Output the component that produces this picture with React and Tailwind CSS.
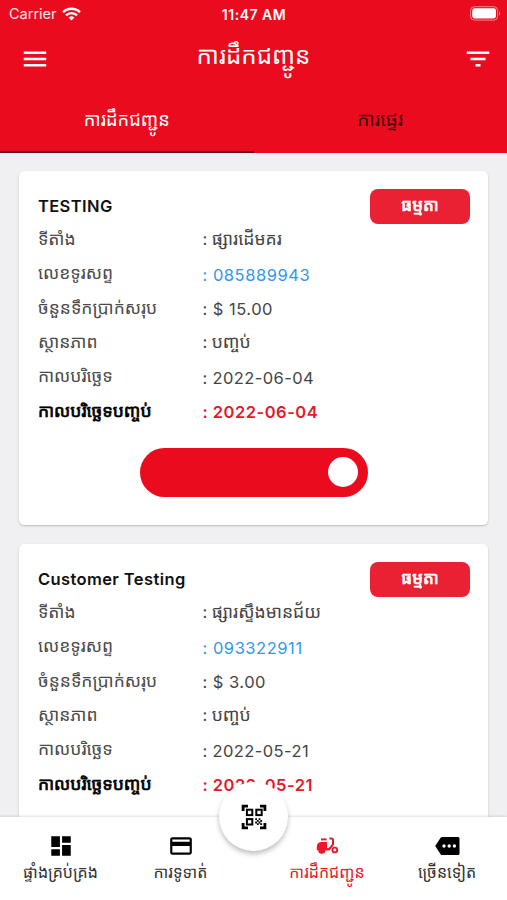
import React from "react";
import {
  MdMenu,
  MdFilterList,
  MdDashboard,
  MdOutlineCreditCard,
} from "react-icons/md";

const deliveries = [
  {
    name: "TESTING",
    location: "ផ្សារដើមគរ",
    phone: "085889943",
    total: "$ 15.00",
    date: "2022-06-04",
    completed: "2022-06-04",
  },
  {
    name: "Customer Testing",
    location: "ផ្សារស្ទឹងមានជ័យ",
    phone: "093322911",
    total: "$ 3.00",
    date: "2022-05-21",
    completed: "2022-05-21",
  },
];

function StatusBar() {
  return (
    <div className="grid h-7 grid-cols-3 items-center pl-[9px] pr-[6px]">
      <div className="flex items-center gap-[6px] text-[14.5px]">
        <span className="text-white/90">Carrier</span>
        <svg className="-translate-x-px" width="19" height="14" viewBox="0 0 19 14" fill="none" stroke="white" strokeWidth="2.3">
          <path d="M1 5.2a12.2 12.2 0 0 1 17 0" />
          <path d="M4 8.3a7.9 7.9 0 0 1 11 0" />
          <path d="M6.6 10.6a4.2 4.2 0 0 1 5.8 0L9.5 13.6z" fill="white" stroke="none" />
        </svg>
      </div>
      <div className="-translate-x-px text-center text-[14px] font-semibold tracking-[0.5px]">11:47 AM</div>
      <svg className="-translate-y-px justify-self-end" width="31" height="15" viewBox="0 0 31 15" fill="none">
        <rect x="0.6" y="0.7" width="27" height="13.4" rx="3.8" stroke="white" strokeOpacity="0.5" />
        <rect x="2.2" y="2.3" width="23.8" height="10.2" rx="2.4" fill="white" />
        <path d="M29 5.2v4.4c1.6-.7 1.6-3.7 0-4.4z" fill="white" fillOpacity="0.55" />
      </svg>
    </div>
  );
}

function QrIcon() {
  return (
    <svg width="26" height="26" viewBox="0 0 26 26" fill="none" stroke="black" strokeWidth="2.8">
      <path d="M2.1 7V2.1H7M19 2.1h4.9V7M23.9 19v4.9H19M7 23.9H2.1V19" />
      <rect x="5.9" y="5.7" width="5.4" height="5.4" strokeWidth="2" />
      <rect x="15.3" y="5.7" width="5.4" height="5.4" strokeWidth="2" />
      <rect x="5.9" y="15.1" width="5.4" height="5.4" strokeWidth="2" />
      <path
        d="M14.2 14.2h1.8v1.8h-1.8zM17.6 14.2h1.8v1.8h-1.8zM15.9 15.9h1.8v1.8h-1.8zM19.3 15.9h1.8v1.8h-1.8zM14.2 17.6h1.8v1.8h-1.8zM17.6 17.6h1.8v1.8h-1.8zM15.9 19.3h1.8v1.8h-1.8zM19.3 19.3h1.8v1.8h-1.8z"
        fill="black"
        stroke="none"
      />
    </svg>
  );
}

function MopedIcon() {
  return (
    <svg width="26" height="26" viewBox="0 0 26 26" fill="none" stroke="currentColor" strokeWidth="2">
      <path d="M7 6.4h5.6" />
      <path d="M12 16.2h3.2l3.8-4.8V7a1.6 1.6 0 0 0-1.6-1.6h-2" />
      <path
        d="M7.4 9H13v6.2h2l1 2h-4.6a3.6 3.6 0 0 1-7.2 0H2.8v-3.6A4.6 4.6 0 0 1 7.4 9z"
        fill="currentColor"
        stroke="none"
      />
      <circle cx="20.8" cy="17" r="2.4" strokeWidth="1.9" />
    </svg>
  );
}

function MoreIcon() {
  return (
    <svg width="26" height="26" viewBox="0 0 26 26">
      <path
        d="M8.3 3.9H24a1.5 1.5 0 0 1 1.5 1.5v15.2a1.5 1.5 0 0 1-1.5 1.5H8.3a2 2 0 0 1-1.7-.9L1.2 13l5.4-8.2a2 2 0 0 1 1.7-.9z"
        fill="black"
      />
      <g fill="white">
        <circle cx="10" cy="13" r="1.7" />
        <circle cx="15.2" cy="13" r="1.7" />
        <circle cx="20.4" cy="13" r="1.7" />
      </g>
    </svg>
  );
}

function Row({ label, value, khmer, labelClass = "text-[#4a4a4a]", valueClass = "tracking-[0.5px] text-[#444]" }) {
  return (
    <div className="flex h-[34.3px] items-center whitespace-nowrap">
      <div className={`w-[164.5px] -translate-y-[2px] text-[17.5px] ${labelClass}`}>{label}</div>
      {khmer ? (
        <div className="flex -translate-y-[2px] items-baseline gap-[4.5px] text-[#444]">
          <span>:</span>
          <span className="text-[17.6px]">{value}</span>
        </div>
      ) : (
        <div className={valueClass}>: {value}</div>
      )}
    </div>
  );
}

function Card({ item }) {
  return (
    <article className="h-[354px] shrink-0 rounded-[5px] bg-white pl-[18.5px] pr-[18px] pt-[18px] shadow-[0_1px_2px_rgba(0,0,0,0.22)]">
      <div className="flex h-[35px] items-center justify-between">
        <h2 className="text-[16.5px] font-semibold tracking-[0.4px] text-[#111]">{item.name}</h2>
        <span className="flex h-[35px] w-[100px] items-center justify-center rounded-[8px] bg-[#ea2133] pb-px text-[17px] text-white [-webkit-text-stroke:0.7px_white]">
          ធម្មតា
        </span>
      </div>
      <div className="text-[16.5px]">
        <Row label="ទីតាំង" value={item.location} khmer />
        <Row label="លេខទូរសព្ទ" value={item.phone} valueClass="tracking-[0.55px] text-[#3298ea]" />
        <Row label="ចំនួនទឹកប្រាក់សរុប" value={item.total} />
        <Row label="ស្ថានភាព" value="បញ្ចប់" khmer />
        <Row label="កាលបរិច្ឆេទ" value={item.date} valueClass="tracking-[0.4px] text-[#444]" />
        <Row
          label="កាលបរិច្ឆេទបញ្ចប់"
          value={item.completed}
          labelClass="text-black [-webkit-text-stroke:0.7px_black]"
          valueClass="tracking-[0.5px] font-semibold text-[#e41a2c]"
        />
      </div>
      <div className="mx-auto mt-[18px] flex h-[49px] w-[228px] items-center justify-end rounded-full bg-[#ea0c1e] pr-[10px]">
        <div className="size-[30px] rounded-full bg-white" />
      </div>
    </article>
  );
}

function NavItem({ icon, label, className = "" }) {
  return (
    <div className={`flex flex-col items-center whitespace-nowrap pt-[16px] ${className}`}>
      {icon}
      <span className="mt-px text-[16px] leading-[24px]">{label}</span>
    </div>
  );
}

export default function App() {
  return (
    <div className="flex h-[900px] w-[507px] flex-col overflow-hidden bg-[#f0f0f3] font-['Inter','Noto_Sans_Khmer','Khmer_OS',sans-serif]">
      <header className="h-[153px] shrink-0 bg-[#ea0c1e] text-white">
        <StatusBar />
        <div className="flex h-[62px] items-center justify-between pl-[20px] pr-[14px]">
          <MdMenu size={30} />
          <h1 className="-translate-x-[3px] -translate-y-[3px] text-[24.2px] leading-[40px]">ការដឹកជញ្ជូន</h1>
          <MdFilterList size={30} />
        </div>
        <div className="grid h-[63px] grid-cols-2 text-center text-[18.3px]">
          <div className="flex items-center justify-center border-b-2 border-[#5c1018] pb-px">ការដឹកជញ្ជូន</div>
          <div className="flex items-center justify-center pb-[3px] text-[19px] text-[#4a060c]">ការផ្ទេរ</div>
        </div>
      </header>
      <main className="flex min-h-0 flex-1 flex-col gap-[19px] overflow-hidden pl-[19.4px] pr-[19px] pt-[18px]">
        {deliveries.map((item) => (
          <Card key={item.name} item={item} />
        ))}
      </main>
      <nav className="relative h-[83px] shrink-0 bg-white text-[#333] shadow-[0_-1px_2px_rgba(0,0,0,0.12)]">
        <div className="grid h-full grid-cols-[121px_119px_27px_120px_120px]">
          <NavItem icon={<MdDashboard size={26} color="#000" />} label="ផ្ទាំងគ្រប់គ្រង" />
          <NavItem icon={<MdOutlineCreditCard size={26} color="#000" />} label="ការទូទាត់" />
          <span />
          <NavItem icon={<MopedIcon />} label="ការដឹកជញ្ជូន" className="text-[#e8192b]" />
          <NavItem icon={<MoreIcon />} label="ច្រើនទៀត" />
        </div>
        <div className="absolute left-[219px] top-[-35px] flex size-[69px] items-center justify-center rounded-full bg-white text-black shadow-[0_3px_5px_rgba(0,0,0,0.25)]">
          <QrIcon />
        </div>
      </nav>
    </div>
  );
}
